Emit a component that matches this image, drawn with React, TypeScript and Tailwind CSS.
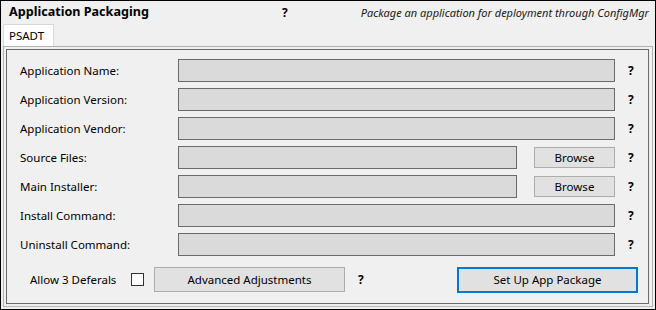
const font = { fontFamily: '"Segoe UI", "Noto Sans", "Open Sans", sans-serif' };

interface FieldRow {
  label: string;
  browse?: boolean;
}

const rows: FieldRow[] = [
  { label: 'Application Name:' },
  { label: 'Application Version:' },
  { label: 'Application Vendor:' },
  { label: 'Source Files:', browse: true },
  { label: 'Main Installer:', browse: true },
  { label: 'Install Command:' },
  { label: 'Uninstall Command:' },
];

function Help() {
  return <span className="block text-[12px] font-bold leading-[12px] text-black">?</span>;
}

export default function App() {
  return (
    <div
      className="w-[656px] h-[310px] border border-black bg-[#f0f0f0] flex flex-col text-black"
      style={font}
    >
      {/* header */}
      <div className="h-[23px] flex items-center pl-[8px] pr-[6px] shrink-0">
        <span className="text-[12.6px] font-bold leading-none w-[273px]">Application Packaging</span>
        <Help />
        <span className="ml-auto text-[11px] italic leading-none text-[#1a1a1a]">
          Package an application for deployment through ConfigMgr
        </span>
      </div>

      {/* tab strip */}
      <div className="h-[22px] flex ml-[2px] shrink-0">
        <div className="w-[51px] bg-white border-l border-t border-r border-[#d9d9d9] flex items-center pl-[5px] text-[11.5px] leading-none">
          PSADT
        </div>
      </div>

      {/* tab page */}
      <div className="flex-1 mx-[2px] mb-[2px] border border-[#b4b4b4] flex">
        <div className="flex-1 mt-[2px] ml-[2px] mr-[3px] mb-[2px] border border-[#696969] flex flex-col pt-[9px] pl-[13px] pr-[14px]">
          <div className="flex flex-col gap-[6px]">
            {rows.map((row) => (
              <div key={row.label} className="h-[23px] flex items-center">
                <span className="w-[158px] text-[11.5px] leading-none">{row.label}</span>
                {row.browse ? (
                  <>
                    <div className="w-[339px] h-[23px] bg-[#dadada] border border-[#6b6b6b]" />
                    <button className="ml-[17px] w-[81px] h-[21px] bg-[#e1e1e1] border border-[#adadad] text-[11.5px] leading-none">
                      Browse
                    </button>
                  </>
                ) : (
                  <div className="flex-1 h-[23px] bg-[#dadada] border border-[#6b6b6b]" />
                )}
                <span className="ml-[13px] w-[6px]">
                  <Help />
                </span>
              </div>
            ))}
          </div>

          {/* bottom row */}
          <div className="mt-[11px] h-[25px] flex items-center">
            <span className="ml-[10px] w-[101px] text-[11.5px] leading-none">Allow 3 Deferals</span>
            <div className="w-[13px] h-[13px] bg-white border border-[#333333]" />
            <button className="ml-[10px] w-[191px] h-[25px] bg-[#e1e1e1] border border-[#adadad] text-[11.5px] leading-none">
              Advanced Adjustments
            </button>
            <span className="ml-[13px]">
              <Help />
            </span>
            <button className="ml-auto mr-[-4px] w-[181px] h-[26px] bg-[#e1e1e1] border-2 border-[#0078d7] text-[11.5px] leading-none">
              Set Up App Package
            </button>
          </div>
        </div>
      </div>
    </div>
  );
}
